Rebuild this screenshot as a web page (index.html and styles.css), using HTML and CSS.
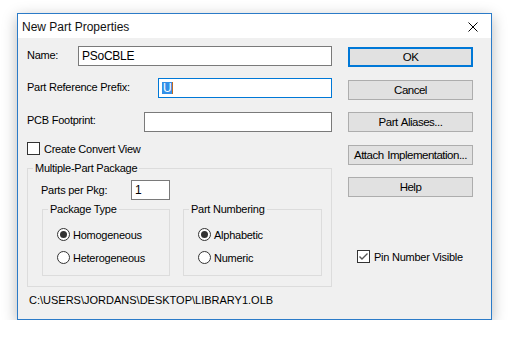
FILE: index.html
```html
<!DOCTYPE html>
<html lang="en">
<head>
    <meta charset="UTF-8">
    <meta name="viewport" content="width=device-width, initial-scale=1.0">
    <title>New Part Properties</title>
    <link rel="stylesheet" href="styles.css">
</head>
<body>
    <div class="window">
        <div class="titlebar">
            <span class="title">New Part Properties</span>
            <svg class="close" width="10" height="10" viewBox="0 0 10 10">
                <path d="M0.5 0.5 L9.5 9.5 M9.5 0.5 L0.5 9.5" stroke="#000" stroke-width="1" fill="none"/>
            </svg>
        </div>
        <div class="content">
            <div class="left">
                <div class="row row-name">
                    <span class="label">Name:</span>
                    <div class="field field-name">PSoCBLE</div>
                </div>
                <div class="row row-prefix">
                    <span class="label">Part Reference Prefix:</span>
                    <div class="field field-prefix focused"><span class="selected">U</span><span class="caret"></span></div>
                </div>
                <div class="row row-pcb">
                    <span class="label">PCB Footprint:</span>
                    <div class="field field-pcb"></div>
                </div>
                <div class="check-row convert">
                    <span class="checkbox"></span>
                    <span>Create Convert View</span>
                </div>
                <fieldset class="group outer">
                    <legend>Multiple-Part Package</legend>
                    <div class="parts-row">
                        <span class="label">Parts per Pkg:</span>
                        <div class="field field-parts">1</div>
                    </div>
                    <div class="subgroups">
                        <fieldset class="group inner package">
                            <legend>Package Type</legend>
                            <div class="radio-row first"><span class="radio on"></span><span>Homogeneous</span></div>
                            <div class="radio-row"><span class="radio"></span><span>Heterogeneous</span></div>
                        </fieldset>
                        <fieldset class="group inner numbering">
                            <legend>Part Numbering</legend>
                            <div class="radio-row first"><span class="radio on"></span><span>Alphabetic</span></div>
                            <div class="radio-row"><span class="radio"></span><span>Numeric</span></div>
                        </fieldset>
                    </div>
                </fieldset>
                <div class="path">C:\USERS\JORDANS\DESKTOP\LIBRARY1.OLB</div>
            </div>
            <div class="right">
                <div class="buttons">
                    <button class="default">OK</button>
                    <button>Cancel</button>
                    <button>Part Aliases...</button>
                    <button>Attach Implementation...</button>
                    <button>Help</button>
                </div>
                <div class="check-row pin">
                    <span class="checkbox checked">
                        <svg width="11" height="11" viewBox="0 0 11 11">
                            <path d="M1.5 5.5 L4 8 L9.5 2.5" stroke="#555" stroke-width="1.4" fill="none"/>
                        </svg>
                    </span>
                    <span>Pin Number Visible</span>
                </div>
            </div>
        </div>
    </div>
</body>
</html>
```

FILE: styles.css
```css
body {
    margin: 0;
    padding: 13px 0 0 17px;
    background-color: #fff;
    font-family: "Liberation Sans", Arial, sans-serif;
    font-size: 11px;
    letter-spacing: -0.25px;
    color: #000;
}

.window {
    width: 473px;
    height: 305px;
    border: 1px solid #2b7bc8;
    background-color: #f0f0f0;
    box-shadow: 0 4px 14px rgba(0, 0, 0, 0.28);
    display: flex;
    flex-direction: column;
}

.titlebar {
    height: 24px;
    background-color: #fff;
    display: flex;
    align-items: center;
    justify-content: space-between;
    padding: 0 13px 0 4px;
}

.title {
    font-size: 12px;
    letter-spacing: 0;
    padding-top: 1px;
    color: #111;
}

.close {
    display: block;
    margin-top: 1px;
}

.content {
    display: flex;
    gap: 16px;
    padding: 0 18px 0 9px;
    flex: 1;
}

.left {
    width: 305px;
    display: flex;
    flex-direction: column;
}

.row {
    display: flex;
    align-items: center;
    justify-content: space-between;
    height: 20px;
}

.row .label {
    padding-bottom: 2px;
}

.row-name {
    margin-top: 8px;
}

.row-prefix {
    margin-top: 12px;
}

.row-pcb {
    margin-top: 14px;
}

.row-pcb .label {
    padding-bottom: 4px;
}

.field {
    box-sizing: border-box;
    height: 20px;
    background-color: #fff;
    border: 1px solid #7a7a7a;
    padding: 1px 3px 0;
    font-size: 12px;
    line-height: 15px;
    display: flex;
    align-items: center;
}

.field-name {
    width: 254px;
}

.field-prefix {
    width: 174px;
}

.field-pcb {
    width: 188px;
}

.focused {
    border-color: #0078d7;
    padding-top: 0;
}

.selected {
    background-color: #3390e8;
    color: #fff;
    line-height: 12px;
    padding: 0 1px;
}

.caret {
    width: 1px;
    height: 12px;
    background-color: #c06a20;
}

.check-row {
    display: flex;
    align-items: center;
    gap: 4px;
    height: 13px;
}

.convert {
    margin-top: 10px;
}

.checkbox {
    box-sizing: border-box;
    width: 13px;
    height: 13px;
    border: 1px solid #333;
    background-color: #fff;
    display: flex;
    align-items: center;
    justify-content: center;
}

.checkbox svg {
    display: block;
}

.group {
    margin: 0;
    padding: 0;
    border: 1px solid #dcdcdc;
    min-width: 0;
}

.group legend {
    margin-left: 5px;
    padding: 0 2px;
    line-height: 14px;
}

.outer {
    margin-top: 6px;
    padding-bottom: 10px;
}

.parts-row {
    display: flex;
    align-items: center;
    margin-top: 5px;
    padding-left: 13px;
    height: 20px;
}

.parts-row .label {
    width: 90px;
    padding-bottom: 1px;
}

.field-parts {
    width: 39px;
    padding-top: 0;
}

.subgroups {
    display: flex;
    gap: 13px;
    margin-top: 2px;
    padding-left: 14px;
}

.inner {
    height: 74px;
    box-sizing: border-box;
}

.package {
    width: 128px;
}

.numbering {
    width: 139px;
}

.radio-row {
    display: flex;
    align-items: center;
    gap: 3px;
    height: 13px;
    margin-top: 10px;
    padding-left: 14px;
}

.radio-row.first {
    margin-top: 12px;
}

.radio {
    box-sizing: border-box;
    width: 13px;
    height: 13px;
    border: 1px solid #333;
    border-radius: 50%;
    background-color: #fff;
    display: flex;
    align-items: center;
    justify-content: center;
}

.radio.on::after {
    content: "";
    width: 7px;
    height: 7px;
    border-radius: 50%;
    background-color: #333;
}

.path {
    margin-top: 6px;
    padding-left: 2px;
    line-height: 14px;
    letter-spacing: 0;
}

.right {
    width: 125px;
    display: flex;
    flex-direction: column;
}

.buttons {
    display: flex;
    flex-direction: column;
    gap: 12.5px;
    margin-top: 9px;
}

button {
    box-sizing: border-box;
    height: 20px;
    width: 100%;
    background-color: #e1e1e1;
    border: 1px solid #adadad;
    font-family: inherit;
    font-size: 11.5px;
    letter-spacing: -0.5px;
    word-spacing: 1px;
    color: #000;
    padding: 0;
    line-height: 18px;
}

button.default {
    border: 2px solid #0078d7;
    line-height: 16px;
}

.pin {
    margin-top: 53px;
    padding-left: 9px;
}
```
